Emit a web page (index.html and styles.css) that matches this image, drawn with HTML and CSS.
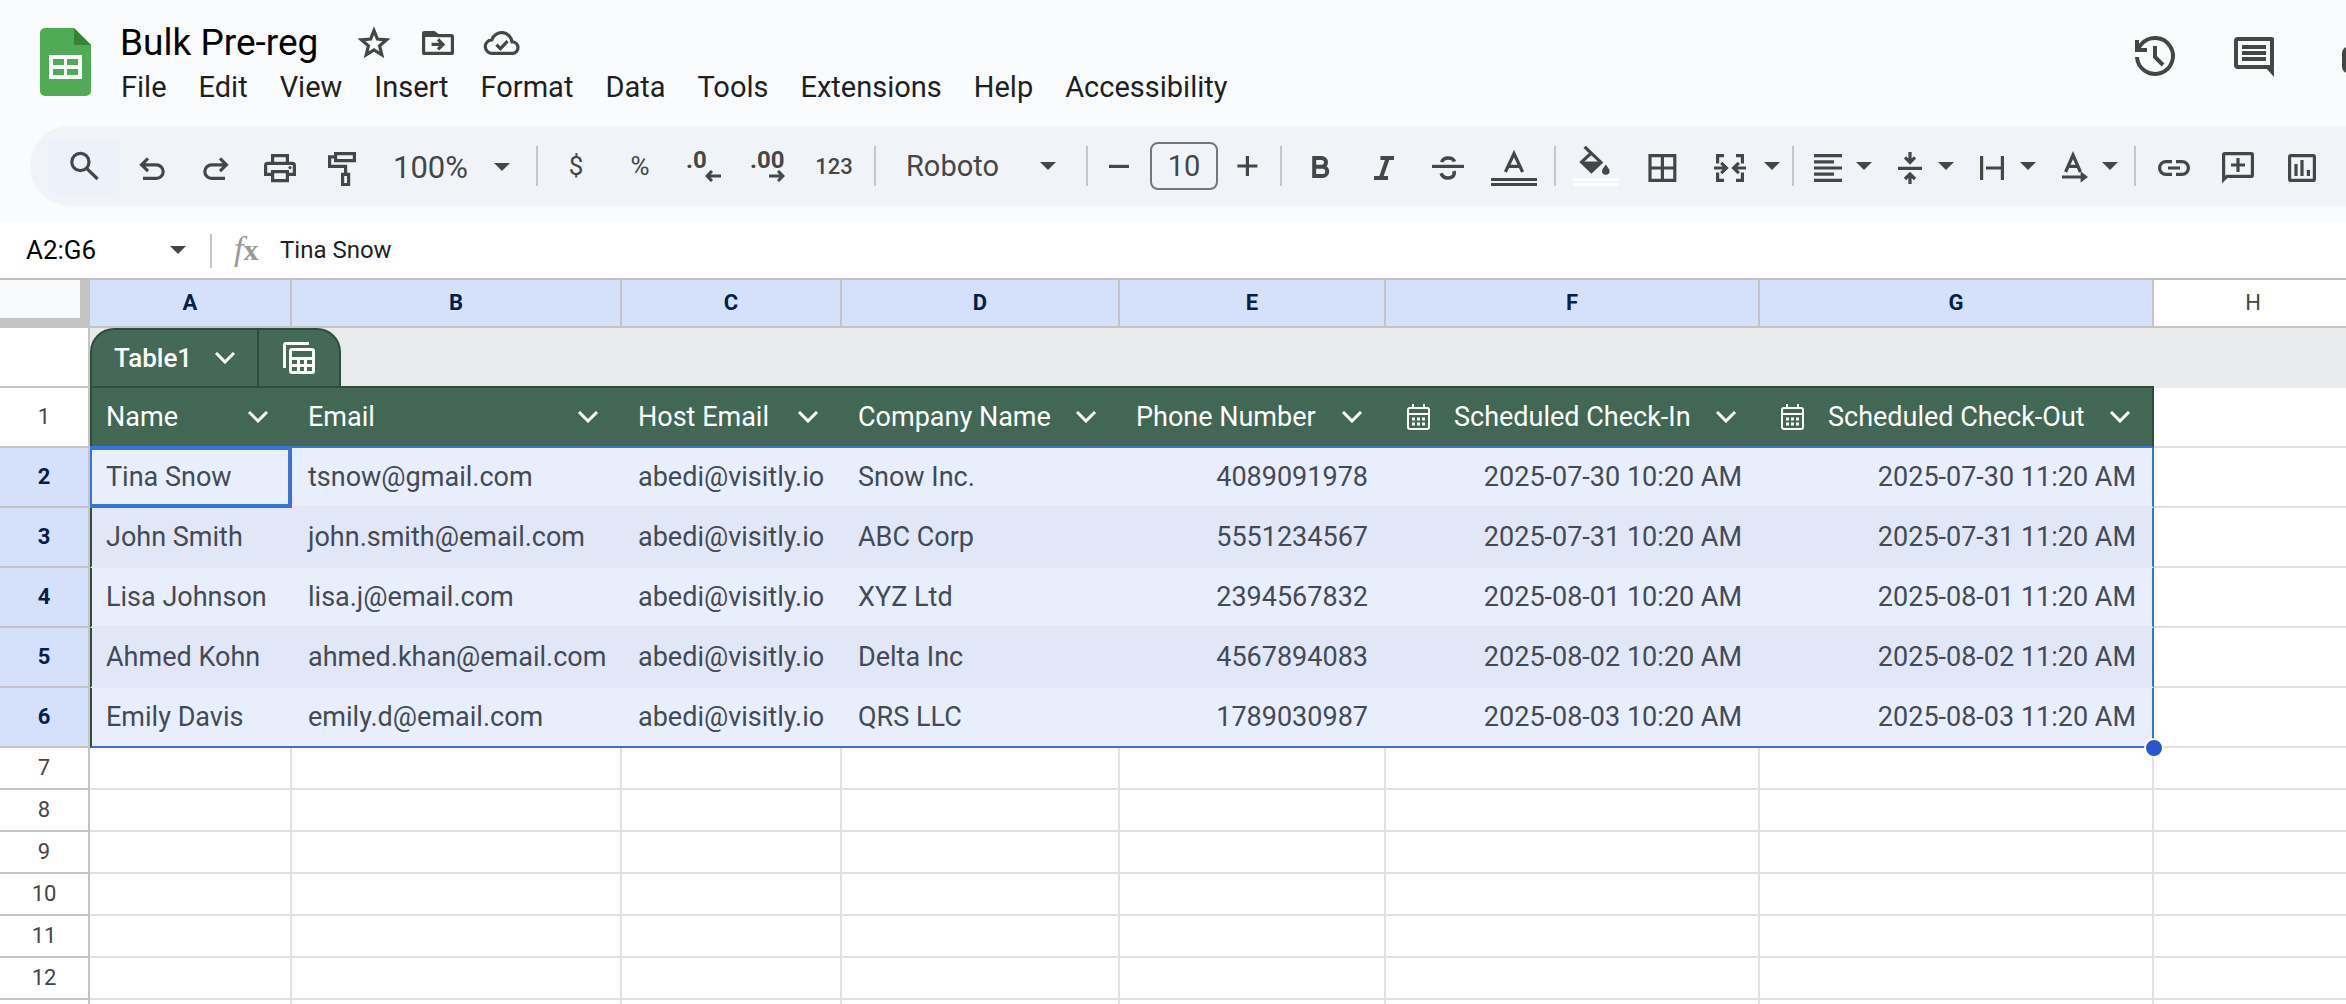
FILE: index.html
```html
<!DOCTYPE html>
<html lang="en">
<head>
  <meta charset="utf-8">
  <title>Bulk Pre-reg</title>
  <link rel="stylesheet" href="styles.css">
</head>
<body>
  <header class="topbar">
    <a href="#" class="logo" aria-label="Sheets home">
      <svg width="52" height="68" viewBox="0 0 52 68">
        <path d="M5 0h29l17 17v46a5 5 0 0 1-5 5H5a5 5 0 0 1-5-5V5a5 5 0 0 1 5-5z" fill="#4fab56"/>
        <path d="M34 0l17 17H34z" fill="#388238"/>
        <path d="M9 27h33v24H9zM13 31v6h11v-6zM27 31v6h11v-6zM13 41v6h11v-6zM27 41v6h11v-6z" fill="#fff" fill-rule="evenodd"/>
      </svg>
    </a>
    <div class="doc">
      <div class="doc-title">
        <h1>Bulk Pre-reg</h1>
        <button class="plain" aria-label="Star"><svg width="40" height="40" viewBox="0 0 20 20"><path d="M10 3.800l1.700 4.200 4.600.4-3.500 3 1.100 4.500-3.900-2.400-3.900 2.400 1.100-4.500-3.500-3 4.600-.4z" class="line"/></svg></button>
        <button class="plain" aria-label="Move"><svg width="40" height="40" viewBox="0 0 20 20"><path d="M2.800 5v9.700c0 .3.2.5.5.5h13.400c.3 0 .5-.2.5-.5V6.800c0-.3-.2-.5-.5-.5H10L8 4.800H3.300c-.3 0-.5 0-.5.2z" class="line"/><path d="M2.300 4.800h6l2 2.200h-8z" class="fill"/><path d="M6.800 10.700h5.400M10 8.200l2.500 2.500-2.500 2.500" class="line"/></svg></button>
        <button class="plain" aria-label="Saved to Drive"><svg width="40" height="40" viewBox="0 0 20 20"><path d="M5.200 15.200a3.400 3.400 0 0 1-.3-6.800 5.200 5.200 0 0 1 10.100 1 2.900 2.900 0 0 1 .2 5.800z" class="line"/><path d="M7.200 10.800l2 2 3.600-3.700" class="line"/></svg></button>
      </div>
      <nav class="menus">
        <button>File</button>
        <button>Edit</button>
        <button>View</button>
        <button>Insert</button>
        <button>Format</button>
        <button>Data</button>
        <button>Tools</button>
        <button>Extensions</button>
        <button>Help</button>
        <button>Accessibility</button>
      </nav>
    </div>
    <div class="actions">
      <button class="plain" aria-label="History"><svg width="48" height="48" viewBox="0 0 48 48"><path d="M6 25a18 18 0 1 0 4.500-13L6 17.500M6 8v10h10M24 14v11l8 8" fill="none" stroke="#444746" stroke-width="4"/></svg></button>
      <button class="plain" aria-label="Comments"><svg width="48" height="48" viewBox="0 0 48 48"><path d="M8 7h34v28H8a2 2 0 0 1-2-2V9a2 2 0 0 1 2-2z" fill="none" stroke="#444746" stroke-width="4" stroke-linejoin="round"/><path d="M12 13h24v4H12zM12 19h24v4H12zM12 25h24v4H12zM36 36h8v9z" fill="#444746"/></svg></button>
      <button class="plain" aria-label="Meet"><svg width="48" height="48" viewBox="0 0 48 48"><rect x="15" y="17" width="24" height="22" rx="4" fill="none" stroke="#444746" stroke-width="4"/></svg></button>
    </div>
  </header>

  <div class="toolbar">
    <button class="tool search" aria-label="Search the menus"><svg width="40" height="40" viewBox="0 0 20 20"><circle cx="8.200" cy="8" r="4.300" class="line"/><path d="M11.300 11.200l5.500 5.300" class="line"/></svg></button>
    <button class="tool" aria-label="Undo"><svg width="40" height="40" viewBox="0 0 20 20"><path d="M5.500 16.200h6.700a3.400 3.400 0 0 0 0-6.800H5M8 6.200L4.800 9.400 8 12.600" class="line"/></svg></button>
    <button class="tool" aria-label="Redo"><svg width="40" height="40" viewBox="0 0 20 20"><path d="M14.500 16.200H7.800a3.400 3.400 0 0 1 0-6.800H15M12 6.200l3.200 3.200-3.200 3.200" class="line"/></svg></button>
    <button class="tool" aria-label="Print"><svg width="40" height="40" viewBox="0 0 20 20"><path d="M6.300 8V4.800h7.400V8M6.300 14.200H2.800V9.700c0-.6.400-1 1-1h12.400c.6 0 1 .4 1 1v4.500h-3.500M6.300 12.800h7.400v4.500H6.300z" class="line"/><circle cx="15" cy="10.800" r=".8" class="fill"/></svg></button>
    <button class="tool" aria-label="Paint format"><svg width="40" height="40" viewBox="0 0 20 20"><path d="M5.800 3.800h9.400v3.500H5.800zM5.800 5.400H2.800v4.800h8v3.800M9.300 14.200h3v5.100h-3z" class="line"/></svg></button>
    <div class="pick zoom">
      <select aria-label="Zoom"><option>100%</option></select>
    </div>
    <span class="sep"></span>
    <button class="tool text">$</button>
    <button class="tool text">%</button>
    <button class="tool decimals" aria-label="Decrease decimal places"><span>.0</span><svg width="16" height="12" viewBox="0 0 16 12"><path d="M16 6H3M7 1L2 6l5 5" fill="none" stroke="#444746" stroke-width="3"/></svg></button>
    <button class="tool decimals" aria-label="Increase decimal places"><span>.00</span><svg width="16" height="12" viewBox="0 0 16 12"><path d="M0 6h13M9 1l5 5-5 5" fill="none" stroke="#444746" stroke-width="3"/></svg></button>
    <button class="tool text formats">123</button>
    <span class="sep"></span>
    <div class="pick font">
      <select aria-label="Font"><option>Roboto</option></select>
    </div>
    <span class="sep"></span>
    <button class="tool step" aria-label="Decrease font size"><svg width="40" height="40" viewBox="0 0 20 20"><path d="M5 10.200h10" class="line"/></svg></button>
    <input class="size" type="text" value="10" aria-label="Font size">
    <button class="tool step" aria-label="Increase font size"><svg width="40" height="40" viewBox="0 0 20 20"><path d="M4.200 10h10M9.200 5v10" class="line"/></svg></button>
    <span class="sep"></span>
    <button class="tool" aria-label="Bold"><svg width="40" height="40" viewBox="0 0 20 20"><path d="M7.100 6h3.700a2.200 2.200 0 0 1 0 4.400H7.100zM7.100 10.400h4.200a2.300 2.300 0 0 1 0 4.600H7.100z" fill="none" stroke="#444746" stroke-width="2"/></svg></button>
    <button class="tool" aria-label="Italic"><svg width="40" height="40" viewBox="0 0 20 20"><path d="M8.200 6H15M5 16h7M11.900 6L8.400 16" fill="none" stroke="#444746" stroke-width="2"/></svg></button>
    <button class="tool" aria-label="Strikethrough"><svg width="40" height="40" viewBox="0 0 20 20"><path d="M2 10.200h16" class="line"/><path d="M13.200 7.800C12.800 6.500 11.600 6 10.100 6c-1.600 0-2.900.7-3.200 2.100M13 12.500c.5 2.300-.9 3.500-3 3.500-1.900 0-3-.9-3.400-2.400" fill="none" stroke="#444746" stroke-width="1.800"/></svg></button>
    <button class="tool colour" aria-label="Text color"><svg width="46" height="40" viewBox="0 0 23 20"><path d="M7.200 13L11.500 3.800 15.800 13M8.700 10.200h5.600" class="line"/><path d="M0 16h23v1.500H0zM0 18.500h23V20H0z" class="fill"/></svg></button>
    <span class="sep"></span>
    <button class="tool colour" aria-label="Fill color"><svg width="46" height="40" viewBox="0 0 23 20"><path d="M5.800.4L14 8.200 9.200 12.800 4.300 8 9.200 3.400" class="line"/><path d="M4.300 7.800H14l-4.800 5zM16.400 9.200c1.200 1.700 1.900 2.400 1.900 3.300a1.900 1.900 0 0 1-3.800 0c0-.9.700-1.600 1.900-3.300z" class="fill"/><path d="M0 16h23v1.500H0zM0 18.500h23V20H0z" fill="#fff"/></svg></button>
    <button class="tool" aria-label="Borders"><svg width="40" height="40" viewBox="0 0 20 20"><path d="M4 4.800h12.400v12.400H4zM10.200 4.800v12.400M4 11h12.400" class="line"/></svg></button>
    <button class="tool drop merge" aria-label="Merge cells"><svg width="40" height="40" viewBox="0 0 20 20"><path d="M7 4.800H3.800v4M13 4.800h3.200v4M7 17.200H3.800v-4M13 17.200h3.200v-4M2 11h6M18 11h-6M5.600 8.400L8.200 11l-2.600 2.600M14.400 8.400L11.800 11l2.600 2.600" class="line"/></svg></button>
    <span class="sep"></span>
    <button class="tool drop" aria-label="Horizontal align"><svg width="40" height="40" viewBox="0 0 20 20"><path d="M3 4.800h14M3 7.900h10M3 11h14M3 14.100h10M3 17.200h14" class="line"/></svg></button>
    <button class="tool drop" aria-label="Vertical align"><svg width="40" height="40" viewBox="0 0 20 20"><path d="M4 11.200h12M10 3v5M7.500 5.700L10 8.200l2.500-2.500M10 19v-5M7.500 16.500l2.500-2.500 2.500 2.500" class="line"/></svg></button>
    <button class="tool drop" aria-label="Text wrapping"><svg width="40" height="40" viewBox="0 0 20 20"><path d="M4.800 5v12M15.200 5v12M7 11h8" class="line"/></svg></button>
    <button class="tool drop" aria-label="Text rotation"><svg width="40" height="40" viewBox="0 0 20 20"><path d="M5.800 13L9.500 4.500 13.200 13M7 10.200h5M4 15.500h10" class="line"/><path d="M13.300 12.600l3.700 2.900-3.700 2.900z" class="fill"/></svg></button>
    <span class="sep"></span>
    <button class="tool" aria-label="Insert link"><svg width="40" height="40" viewBox="0 0 20 20"><path d="M9 7.800H6a3.200 3.200 0 0 0 0 6.400h3M11 7.800h3a3.200 3.200 0 0 1 0 6.400h-3M7 11h6" class="line"/></svg></button>
    <button class="tool" aria-label="Insert comment"><svg width="40" height="40" viewBox="0 0 20 20"><path d="M2.800 16.800V4.400c0-.3.300-.6.600-.6h13.200c.3 0 .6.300.6.600v10.200c0 .3-.3.600-.6.600H4.500zM10 6v7M6.500 9.500h7" class="line"/></svg></button>
    <button class="tool" aria-label="Insert chart"><svg width="40" height="40" viewBox="0 0 20 20"><rect x="3.800" y="4.800" width="12.400" height="12.400" rx=".6" class="line"/><path d="M7 9v6M10 7v8M13.200 12v3" class="line"/></svg></button>
  </div>

  <div class="formula-bar">
    <div class="pick name-box">
      <input type="text" value="A2:G6" aria-label="Name box">
    </div>
    <span class="sep"></span>
    <label class="fx" for="formula"><i>f</i><b>x</b></label>
    <input id="formula" class="formula" type="text" value="Tina Snow">
  </div>

  <main class="sheet">
    <table class="grid">
      <colgroup>
        <col class="col-num"><col class="col-a"><col class="col-b"><col class="col-c"><col class="col-d"><col class="col-e"><col class="col-f"><col class="col-g"><col class="col-h">
      </colgroup>
      <thead>
        <tr class="letters">
          <th class="corner"></th>
          <th class="sel">A</th><th class="sel">B</th><th class="sel">C</th><th class="sel">D</th><th class="sel">E</th><th class="sel">F</th><th class="sel">G</th><th>H</th>
        </tr>
      </thead>
      <tbody>
        <tr class="tab-row">
          <th></th>
          <td colspan="7">
            <div class="tab">
              <button class="tab-name">Table1<svg width="20" height="12" viewBox="0 0 20 12"><path d="M1 1l9 9 9-9" class="chev"/></svg></button>
              <button class="tab-view" aria-label="Table views"><svg width="32" height="32" viewBox="0 0 32 32"><path d="M1.500 26V3c0-1 .5-1.500 1.500-1.500h23" fill="none" stroke="#fff" stroke-width="3"/><path d="M9 6h20a3 3 0 0 1 3 3v20a3 3 0 0 1-3 3H9a3 3 0 0 1-3-3V9a3 3 0 0 1 3-3zM9 9v6h20V9zM9 18v4h5v-4zM17 18v4h4v-4zM24 18v4h5v-4zM9 25v4h5v-4zM17 25v4h4v-4zM24 25v4h5v-4z" fill="#fff" fill-rule="evenodd"/></svg></button>
            </div>
          </td>
          <td></td>
        </tr>
        <tr class="fields">
          <th>1</th>
          <td><div class="field">Name<svg width="20" height="12" viewBox="0 0 20 12"><path d="M1 1l9 9 9-9" class="chev"/></svg></div></td>
          <td><div class="field">Email<svg width="20" height="12" viewBox="0 0 20 12"><path d="M1 1l9 9 9-9" class="chev"/></svg></div></td>
          <td><div class="field">Host Email<svg width="20" height="12" viewBox="0 0 20 12"><path d="M1 1l9 9 9-9" class="chev"/></svg></div></td>
          <td><div class="field">Company Name<svg width="20" height="12" viewBox="0 0 20 12"><path d="M1 1l9 9 9-9" class="chev"/></svg></div></td>
          <td><div class="field">Phone Number<svg width="20" height="12" viewBox="0 0 20 12"><path d="M1 1l9 9 9-9" class="chev"/></svg></div></td>
          <td><div class="field"><svg class="cal" width="32" height="32" viewBox="0 0 32 32"><rect x="6" y="7" width="21" height="21" rx="2"/><path d="M6 13h21M11 3v4M22 3v4"/><path d="M10 18h3M15 18h3M20 18h3M10 23h3M15 23h3M20 23h3" class="dots"/></svg>Scheduled Check-In<svg width="20" height="12" viewBox="0 0 20 12"><path d="M1 1l9 9 9-9" class="chev"/></svg></div></td>
          <td><div class="field"><svg class="cal" width="32" height="32" viewBox="0 0 32 32"><rect x="6" y="7" width="21" height="21" rx="2"/><path d="M6 13h21M11 3v4M22 3v4"/><path d="M10 18h3M15 18h3M20 18h3M10 23h3M15 23h3M20 23h3" class="dots"/></svg>Scheduled Check-Out<svg width="20" height="12" viewBox="0 0 20 12"><path d="M1 1l9 9 9-9" class="chev"/></svg></div></td>
          <td></td>
        </tr>
        <tr class="data">
          <th>2</th><td class="active">Tina Snow</td><td>tsnow@gmail.com</td><td>abedi@visitly.io</td><td>Snow Inc.</td><td class="num">4089091978</td><td class="num">2025-07-30 10:20 AM</td><td class="num">2025-07-30 11:20 AM</td><td></td>
        </tr>
        <tr class="data odd">
          <th>3</th><td>John Smith</td><td>john.smith@email.com</td><td>abedi@visitly.io</td><td>ABC Corp</td><td class="num">5551234567</td><td class="num">2025-07-31 10:20 AM</td><td class="num">2025-07-31 11:20 AM</td><td></td>
        </tr>
        <tr class="data">
          <th>4</th><td>Lisa Johnson</td><td>lisa.j@email.com</td><td>abedi@visitly.io</td><td>XYZ Ltd</td><td class="num">2394567832</td><td class="num">2025-08-01 10:20 AM</td><td class="num">2025-08-01 11:20 AM</td><td></td>
        </tr>
        <tr class="data odd">
          <th>5</th><td>Ahmed Kohn</td><td>ahmed.khan@email.com</td><td>abedi@visitly.io</td><td>Delta Inc</td><td class="num">4567894083</td><td class="num">2025-08-02 10:20 AM</td><td class="num">2025-08-02 11:20 AM</td><td></td>
        </tr>
        <tr class="data last">
          <th>6</th><td>Emily Davis</td><td>emily.d@email.com</td><td>abedi@visitly.io</td><td>QRS LLC</td><td class="num">1789030987</td><td class="num">2025-08-03 10:20 AM</td><td class="num handle">2025-08-03 11:20 AM</td><td></td>
        </tr>
        <tr><th>7</th><td></td><td></td><td></td><td></td><td></td><td></td><td></td><td></td></tr>
        <tr><th>8</th><td></td><td></td><td></td><td></td><td></td><td></td><td></td><td></td></tr>
        <tr><th>9</th><td></td><td></td><td></td><td></td><td></td><td></td><td></td><td></td></tr>
        <tr><th>10</th><td></td><td></td><td></td><td></td><td></td><td></td><td></td><td></td></tr>
        <tr><th>11</th><td></td><td></td><td></td><td></td><td></td><td></td><td></td><td></td></tr>
        <tr><th>12</th><td></td><td></td><td></td><td></td><td></td><td></td><td></td><td></td></tr>
        <tr><th></th><td></td><td></td><td></td><td></td><td></td><td></td><td></td><td></td></tr>
      </tbody>
    </table>
  </main>
</body>
</html>
```

FILE: styles.css
```css
* { box-sizing: border-box; }
body { margin: 0; height: 100vh; display: flex; flex-direction: column; overflow: hidden; background: #f9fbfd; font-family: Roboto, "Liberation Sans", sans-serif; color: #1f1f1f; }
button, input, select { font: inherit; color: inherit; margin: 0; padding: 0; border: 0; background: none; }
svg { display: block; flex: none; }

.line { fill: none; stroke: #444746; stroke-width: 1.6; }
.fill { fill: #444746; }
.chev { fill: none; stroke: #fff; stroke-width: 3; }

/* title and menus */
.topbar { display: flex; flex: none; height: 126px; }
.logo { margin: 28px 28px 0 40px; }
.doc { padding-top: 19px; }
.doc-title { display: flex; align-items: center; gap: 24px; height: 48px; }
.doc-title h1 { margin: 0 12px 0 0; font-size: 37px; line-height: 48px; font-weight: 400; color: #000; }
.menus { display: flex; gap: 32px; padding-left: 1px; font-size: 29px; line-height: 40px; }
.actions { display: flex; gap: 51px; height: 48px; margin: 32px -31px 0 auto; }

/* toolbar */
.toolbar { display: flex; flex: none; align-items: center; height: 80px; margin: 0 0 16px 30px; padding-left: 18px; border-radius: 40px 0 0 40px; background: #f0f4f9; color: #444746; }
.tool { display: flex; flex: none; align-items: center; justify-content: center; width: 64px; height: 56px; }
.tool.search { width: 72px; border-radius: 8px; background: #edf2fa; }
.tool.text { font-size: 26px; }
.tool.formats { width: 68px; font-size: 22px; font-weight: 500; }
.tool.step { width: 50px; }
.tool.colour { width: 68px; }
.tool.decimals { flex-direction: column; font-size: 24px; line-height: 20px; font-weight: 700; }
.tool.decimals span { width: 36px; text-align: left; }
.tool.decimals svg { margin-left: 18px; }
.tool.drop { width: 82px; justify-content: flex-start; gap: 8px; padding-left: 8px; }
.tool.merge { width: 92px; gap: 14px; padding-left: 16px; }
.tool.drop::after, .pick::after { content: ""; border: 8px solid transparent; border-top-color: #444746; border-bottom: 0; }
.sep { flex: none; width: 2px; height: 40px; margin: 0 6px; background: #c7c7c7; }
.pick { display: flex; flex: none; align-items: center; font-size: 29px; }
.pick select, .pick input { flex: 1; min-width: 0; appearance: none; }
.pick.zoom { width: 154px; padding: 2px 20px 0 17px; font-size: 31px; }
.font { width: 198px; padding: 0 24px; }
.size { flex: none; width: 68px; height: 48px; margin: 0 6px; border: 2px solid #747775; border-radius: 8px; font-size: 29px; text-align: center; }

/* formula bar */
.formula-bar { display: flex; flex: none; align-items: center; height: 58px; border-bottom: 2px solid #c0c0c0; background: #fff; font-size: 24px; }
.formula-bar .sep { height: 34px; margin: 2px 22px 0 24px; }
.name-box { width: 186px; padding-left: 26px; font-size: 26px; color: #000; }
.fx { display: flex; width: 46px; line-height: 32px; color: #999; }
.fx i { font: italic 34px/32px "Liberation Serif", serif; }
.fx b { font: 700 30px/34px "Liberation Serif", serif; }
.formula { flex: 1; }

/* grid */
.sheet { flex: 1; min-height: 0; overflow: hidden; background: #fff; }
.grid { width: 2354px; table-layout: fixed; border-collapse: separate; border-spacing: 0; font-size: 27px; }
.col-num { width: 90px; }
.col-a { width: 202px; }
.col-b { width: 330px; }
.col-c { width: 220px; }
.col-d { width: 278px; }
.col-e { width: 266px; }
.col-f { width: 374px; }
.col-g { width: 394px; }
.col-h { width: 200px; }
.grid th { height: 42px; padding: 0; border: solid #c4c4c4; border-width: 0 2px 2px 0; background: #fff; font-size: 22px; line-height: 26px; font-weight: 400; color: #444746; }
.grid td { padding: 0 16px; border: solid #e1e1e1; border-width: 0 2px 2px 0; line-height: 32px; white-space: nowrap; }
.grid .letters th { height: 48px; }
.grid .letters .sel, .grid .data th { background: #d5e1fb; font-weight: 700; color: #041e49; }
.grid .letters .corner { border: solid #c4c4c4; border-width: 0 10px 10px 0; background: #f8f9fa; }

.grid .tab-row th, .grid .fields th, .grid .data th { height: 60px; }
.grid .tab-row td { padding: 0; border-right: 0; border-color: #2f4d3f; background: #e8eaeb; }
.grid .tab-row td:last-child { border-color: #e8eaeb; }
.tab { display: flex; width: 251px; height: 58px; border: 2px solid #2f4d3f; border-bottom: 0; border-radius: 24px 24px 0 0; background: #446a57; color: #fff; }
.tab-name { display: flex; align-items: center; justify-content: space-between; width: 167px; padding: 0 22px; border-right: 2px solid #2f4d3f; font-size: 26px; font-weight: 500; }
.tab-view { display: flex; flex: 1; align-items: center; justify-content: center; }

.grid .fields td { padding-right: 24px; border-right: 0; border-bottom-color: #3871e0; background: #426855; color: #fff; }
.grid .fields td:nth-child(2), .grid .data td:nth-child(2) { padding-left: 14px; border-left: 2px solid #2f4d3f; }
.grid .fields td:nth-child(8) { padding-right: 22px; border-right: 2px solid #2f4d3f; }
.field { display: flex; align-items: center; }
.field svg:last-child { margin-left: auto; }
.cal { margin-right: 20px; fill: none; stroke: #fff; stroke-width: 2; }
.cal .dots { stroke-width: 3; }

.grid .data td { position: relative; padding-right: 18px; border-right: 0; border-bottom-color: #e1e7f7; background: #e8eefb; color: #434a56; }
.grid .odd td { background: #e1e7f7; }
.grid .data td:nth-child(8) { padding-right: 16px; border-right: 2px solid #3871e0; }
.grid .last td { border-bottom-color: #3871e0; }
.grid .num { text-align: right; }
.grid .fields td:last-child, .grid .data td:last-child { border-color: #e1e1e1; background: #fff; }
.active::after { content: ""; position: absolute; inset: -2px 0 -2px -2px; border: 4px solid #3871e0; border-left-width: 2px; }
.handle::after { content: ""; position: absolute; z-index: 1; right: -12px; bottom: -12px; width: 16px; height: 16px; border: 2px solid #fff; border-radius: 50%; background: #2756cf; }

/* last rules above share .data td, so keep the striping after the base row */
.grid .odd td:not(:last-child) { background: #e1e7f7; }
.grid .last td:not(:last-child) { border-bottom-color: #3871e0; }
```
